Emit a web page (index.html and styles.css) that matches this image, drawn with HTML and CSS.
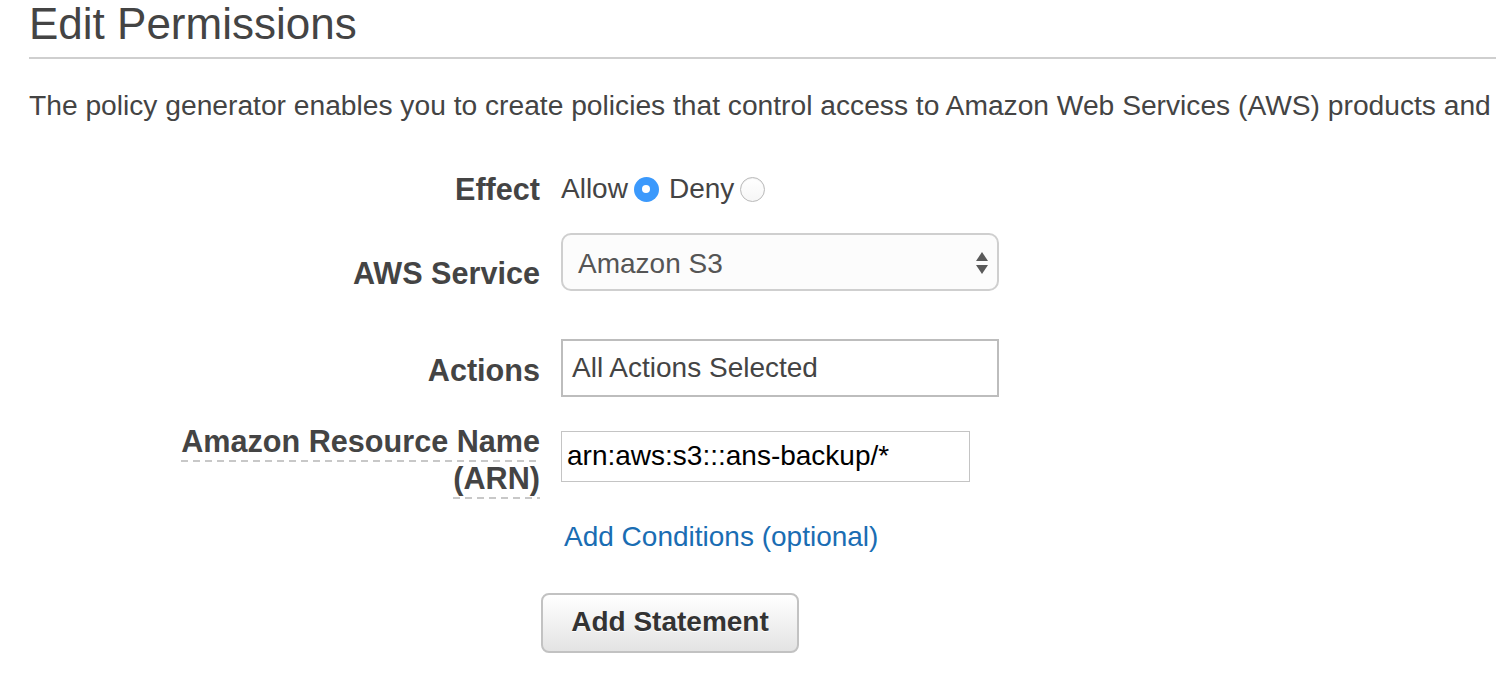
FILE: index.html
```html
<!DOCTYPE html>
<html>
<head>
<meta charset="utf-8">
<link rel="stylesheet" href="styles.css">
</head>
<body>
<div class="page">
  <h1 class="title">Edit Permissions</h1>
  <p class="intro">The policy generator enables you to create policies that control access to Amazon Web Services (AWS) products and</p>

  <div class="row row-effect">
    <div class="label">Effect</div>
    <div class="control radios">
      <span class="opt">Allow</span><span class="radio checked"></span>
      <span class="opt opt-deny">Deny</span><span class="radio"></span>
    </div>
  </div>

  <div class="row row-service">
    <div class="label label-service">AWS Service</div>
    <div class="control">
      <div class="select">
        <span class="select-text">Amazon S3</span>
        <span class="arrows"><span class="up"></span><span class="down"></span></span>
      </div>
    </div>
  </div>

  <div class="row row-actions">
    <div class="label label-actions">Actions</div>
    <div class="control">
      <div class="textbox actions">All Actions Selected</div>
    </div>
  </div>

  <div class="row row-arn">
    <div class="label label-arn"><span class="abbr">Amazon Resource Name (ARN)</span></div>
    <div class="control">
      <div class="textbox arn">arn:aws:s3:::ans-backup/*</div>
    </div>
  </div>

  <div class="row row-link">
    <div class="label"></div>
    <div class="control"><a class="link" href="#">Add Conditions (optional)</a></div>
  </div>

  <div class="button-row">
    <button class="btn">Add Statement</button>
  </div>
</div>
</body>
</html>
```

FILE: styles.css
```css
html, body {
  margin: 0;
  padding: 0;
  background: #fff;
}
body {
  font-family: "Liberation Sans", Arial, sans-serif;
  color: #444;
  overflow: hidden;
}
.page {
  padding-left: 29px;
}
.title {
  margin: 0;
  font-size: 44px;
  line-height: 48px;
  font-weight: normal;
  color: #444;
  padding-bottom: 9px;
  border-bottom: 2px solid #cfcfcf;
}
.intro {
  margin: 29px 0 0;
  font-size: 28.2px;
  line-height: 34px;
  white-space: nowrap;
}
.row {
  display: grid;
  grid-template-columns: 511px 1fr;
  column-gap: 21px;
  align-items: start;
}
.label {
  font-size: 30.6px;
  line-height: 36px;
  font-weight: bold;
  text-align: right;
  color: #444;
}
.control {
  font-size: 28px;
  line-height: 36px;
}
.row-effect { margin-top: 49px; }
.radios {
  display: flex;
  align-items: center;
  height: 36px;
}
.opt-deny { margin-left: 10px; }
.radio {
  box-sizing: border-box;
  width: 25px;
  height: 25px;
  border-radius: 50%;
  margin-left: 6px;
  border: 1px solid #b9b9b9;
  background: linear-gradient(#ffffff, #f6f6f6);
  box-shadow: inset 0 1px 1px rgba(0,0,0,0.06);
  position: relative;
}
.radio.checked {
  border: none;
  background: #3b99fc;
  box-shadow: none;
}
.radio.checked::after {
  content: "";
  position: absolute;
  left: 8.5px;
  top: 8.5px;
  width: 8px;
  height: 8px;
  border-radius: 50%;
  background: #fff;
}
.row-service { margin-top: 26px; }
.label-service { padding-top: 22px; }
.select {
  box-sizing: border-box;
  width: 438px;
  height: 58px;
  border: 2px solid #cfcfcf;
  border-radius: 10px;
  background: #fcfcfc;
  display: flex;
  align-items: center;
  justify-content: space-between;
  padding: 0 9px 0 15px;
  color: #555;
  line-height: 34px;
}
.select-text { padding-top: 3px; }
.arrows {
  display: flex;
  flex-direction: column;
  gap: 4px;
  margin-top: 2px;
}
.up, .down {
  width: 0;
  height: 0;
  border-left: 6px solid transparent;
  border-right: 6px solid transparent;
}
.up { border-bottom: 9px solid #5a5a5a; }
.down { border-top: 9px solid #5a5a5a; }
.row-actions { margin-top: 48px; }
.label-actions { padding-top: 13px; }
.textbox {
  box-sizing: border-box;
  display: flex;
  align-items: center;
}
.actions {
  width: 438px;
  height: 58px;
  border: 2px solid #bdbdbd;
  padding: 0 9px;
  color: #444;
  line-height: 34px;
}
.row-arn { margin-top: 26px; }
.label-arn {
  line-height: 37px;
  padding-left: 130px;
}
.abbr {
  padding-bottom: 4px;
  background-image: repeating-linear-gradient(to right, #c8c8c8 0 7px, transparent 7px 12px);
  background-size: 100% 2px;
  background-position: left bottom;
  background-repeat: no-repeat;
  -webkit-box-decoration-break: clone;
  box-decoration-break: clone;
}
.arn {
  margin-top: 8px;
  width: 409px;
  height: 51px;
  border: 1px solid #c4c4c4;
  padding: 0 5px 2px;
  color: #000;
  font-size: 28px;
  line-height: 34px;
}
.row-link { margin-top: 22px; }
.link {
  display: inline-block;
  padding-left: 3px;
  color: #1a6db3;
  text-decoration: none;
  line-height: 34px;
}
.button-row {
  margin-top: 38px;
  padding-left: 512px;
}
.btn {
  box-sizing: border-box;
  width: 258px;
  height: 60px;
  border: 2px solid #c2c2c2;
  border-radius: 8px;
  background: linear-gradient(#ffffff, #e3e3e3);
  font-family: "Liberation Sans", Arial, sans-serif;
  font-size: 28px;
  font-weight: bold;
  color: #333;
  text-shadow: 0 1px 0 #fff;
  padding: 0 0 2px;
  cursor: pointer;
}
```
